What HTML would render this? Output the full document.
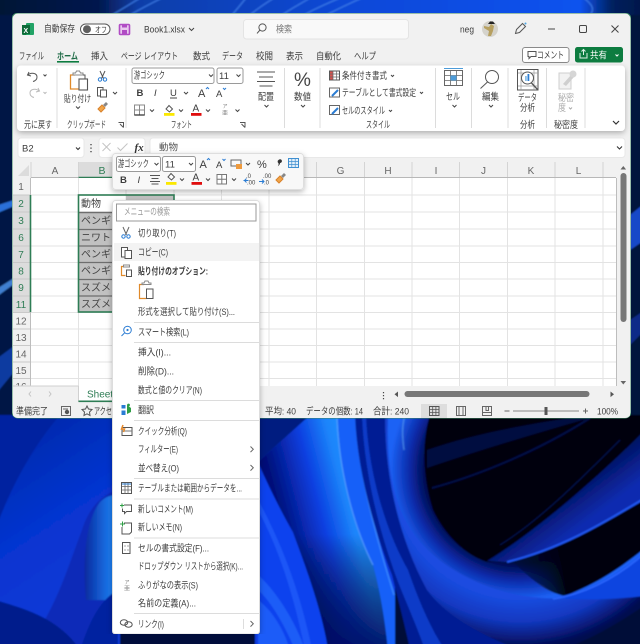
<!DOCTYPE html>
<html lang="ja"><head><meta charset="utf-8"><title>Excel</title>
<style>
html,body{margin:0;padding:0;background:#000;width:640px;height:644px;overflow:hidden}
svg{display:block}
text{font-family:"Liberation Sans","Noto Sans CJK JP",sans-serif;font-size:9.5px;fill:#3c3c3c}
.r{font-size:10px;fill:#666;text-anchor:middle}
.n{font-size:10px;fill:#2f7d55;text-anchor:middle}
.b{font-weight:bold}
.s{fill:none;stroke:#555;stroke-width:1}
.c{fill:none;stroke:#444;stroke-width:1}
.l{stroke:#e3e3e3;stroke-width:1}
.sp{stroke:#dcdcdc;stroke-width:1}
</style></head><body>
<svg xmlns="http://www.w3.org/2000/svg" width="640" height="644" viewBox="0 0 640 644">
<defs>
<linearGradient id="mainG" gradientUnits="userSpaceOnUse" x1="285" y1="535" x2="362" y2="515"><stop offset="0" stop-color="#020f78"/><stop offset=".5" stop-color="#0b3fe0"/><stop offset=".85" stop-color="#1c84fa"/><stop offset="1" stop-color="#1f8cff"/></linearGradient>
<linearGradient id="mainV" x1="0" y1="0" x2="0" y2="1"><stop offset="0" stop-color="#000" stop-opacity="0"/><stop offset=".5" stop-color="#000" stop-opacity="0"/><stop offset="1" stop-color="#000a60" stop-opacity=".9"/></linearGradient>
<radialGradient id="rB" gradientUnits="userSpaceOnUse" cx="520" cy="470" r="130"><stop offset="0" stop-color="#00010c"/><stop offset=".72" stop-color="#020a4a"/><stop offset=".85" stop-color="#0a2aa8"/><stop offset="1" stop-color="#1c62f5"/></radialGradient>
<radialGradient id="rL" gradientUnits="userSpaceOnUse" cx="520" cy="470" r="178"><stop offset=".72" stop-color="#1a4ce0"/><stop offset=".85" stop-color="#1238c0"/><stop offset="1" stop-color="#020a50"/></radialGradient>
<linearGradient id="wedge" gradientUnits="userSpaceOnUse" x1="505" y1="575" x2="562" y2="565"><stop offset="0" stop-color="#000410" stop-opacity="0"/><stop offset="1" stop-color="#000410"/></linearGradient>
<linearGradient id="streak" gradientUnits="userSpaceOnUse" x1="560" y1="480" x2="590" y2="520"><stop offset="0" stop-color="#020a48"/><stop offset="1" stop-color="#0a2cb0"/></linearGradient>
<linearGradient id="blob" gradientUnits="userSpaceOnUse" x1="84" y1="540" x2="114" y2="540"><stop offset="0" stop-color="#08289c"/><stop offset="1" stop-color="#1e84f8"/></linearGradient>
<linearGradient id="leftG" gradientUnits="userSpaceOnUse" x1="0" y1="430" x2="112" y2="600"><stop offset="0" stop-color="#0328a8"/><stop offset=".5" stop-color="#0634d0"/><stop offset="1" stop-color="#0a3ad8"/></linearGradient>
<linearGradient id="topG" x1="0" y1="0" x2="1" y2="0"><stop offset="0" stop-color="#041334"/><stop offset=".16" stop-color="#04194e"/><stop offset=".22" stop-color="#0d3ea8"/><stop offset=".55" stop-color="#0a48d8"/><stop offset=".9" stop-color="#0a52ee"/><stop offset=".95" stop-color="#03205e"/><stop offset="1" stop-color="#031648"/></linearGradient>
<filter id="bl" x="-5%" y="-5%" width="110%" height="110%"><feGaussianBlur stdDeviation=".8"/></filter>
<filter id="soft" x="0" y="0" width="100%" height="100%"><feGaussianBlur stdDeviation=".35"/></filter>
<filter id="sh" x="-20%" y="-20%" width="140%" height="140%"><feDropShadow dx="0" dy="2" stdDeviation="3" flood-color="#000" flood-opacity=".28"/></filter>
<clipPath id="win"><rect x="12" y="13" width="619" height="405" rx="6"/></clipPath>
</defs>

<!-- wallpaper -->
<g filter="url(#bl)">
<rect x="-5" y="-5" width="650" height="654" fill="#020a3a"/>
<rect x="-5" y="-5" width="650" height="25" fill="url(#topG)"/>
<g fill="none" stroke="#3f7fe8" stroke-width="1.5" opacity=".75">
<path d="M112 15 C124 8 132 3 140 -2"/><path d="M130 15 C142 8 152 3 162 -2"/><path d="M232 15 C238 8 242 3 246 -2"/><path d="M250 15 C258 8 266 3 274 -2"/><path d="M282 15 C292 8 302 3 310 -2"/><path d="M304 15 C316 8 328 3 340 -2"/><path d="M326 15 C340 8 350 3 362 -2"/><path d="M590 15 C596 8 590 3 584 -2"/>
</g>
<rect x="-5" y="15" width="18" height="410" fill="#041744"/>
<path d="M-5 206 L14 200 L14 206 L-5 214Z" fill="#2a6fd8"/>
<path d="M-5 290 L14 278 L14 284 L-5 298Z" fill="#3f7fd0"/>
<path d="M-5 360 L14 346 L14 372 L-5 395Z" fill="#0d3aa0"/>
<rect x="630" y="15" width="15" height="410" fill="#04123e"/>
<path d="M630 215 L645 203 L645 240 L630 250Z" fill="#1748c8"/>
<path d="M630 320 L645 310 L645 330 L630 345Z" fill="#0a2a88"/>
<!-- bottom left -->
<rect x="-5" y="415" width="125" height="235" fill="url(#leftG)"/>
<path d="M-5 415 H60 C30 450 10 490 -5 530Z" fill="#0222a0"/>
<path d="M30 644 C60 600 70 560 82 530 C88 510 100 495 118 490 V650 H30Z" fill="#0a2cb8"/>
<path d="M86 600 C82 560 86 520 100 502 C106 496 112 495 118 495 V600Z" fill="url(#blob)"/>
<path d="M-5 600 C30 610 60 620 80 650 H-5Z" fill="#031c8c"/>
<path d="M80 650 C90 620 100 600 118 590 V650Z" fill="#0420a0"/>
<!-- right of menu -->
<rect x="255" y="415" width="140" height="235" fill="#0a3adf"/>
<path d="M258 415 H310 L258 462Z" fill="#041a80"/>
<path id="mn" d="M258 462 L307 418 H338 C340 470 352 525 373 565 C380 590 385 620 388 650 H328 C322 610 305 565 293 532 C280 510 268 485 258 462Z" fill="url(#mainG)"/>
<path d="M258 462 L307 418 H338 C340 470 352 525 373 565 C380 590 385 620 388 650 H328 C322 610 305 565 293 532 C280 510 268 485 258 462Z" fill="url(#mainV)"/>
<path d="M258 464 C270 490 282 512 293 534 C305 565 322 610 328 650 H258Z" fill="#0c42ee"/>
<path d="M258 500 C280 540 300 590 312 650 H305 C295 600 280 550 258 510Z" fill="#2a6aff" opacity=".5"/>
<path d="M258 575 C275 590 295 620 305 650 H295 C285 625 270 600 258 590Z" fill="#2f74ff" opacity=".55"/>
<path d="M258 600 C272 610 284 630 290 650 H258Z" fill="#1a5cf8"/>
<path d="M338 415 H357 C358 470 374 530 394 590 C400 615 406 635 410 650 H388 C385 620 380 590 373 565 C352 525 340 470 338 415Z" fill="#1460f8"/>
<path d="M337 418 C339 468 352 523 373 565" fill="none" stroke="#5aa0ff" stroke-width="1.2" opacity=".8"/>
<path d="M356 415 C358 470 374 530 394 595" fill="none" stroke="#3f8cff" stroke-width="1.5" opacity=".8"/>
<!-- dark right area -->
<rect x="395" y="415" width="250" height="235" fill="#020838"/>
<path d="M355 415 H400 L440 600 L540 650 H410 C405 625 398 600 392 575 C374 530 357 470 355 415Z" fill="#041c94"/>
<path d="M366 415 C368 470 385 530 408 570 C415 590 428 625 445 650 H425 C415 620 400 590 392 565 C378 525 364 470 362 415Z" fill="#0e3ac8"/>
<path d="M385 415 C385 480 400 540 427 590 C445 615 480 635 520 650 H560 C590 640 620 622 645 605 V415Z" fill="url(#rL)"/>
<path d="M388 415 C386 470 395 510 417 538 C440 568 490 595 543 598 C580 600 610 598 645 596 V415Z" fill="url(#rB)"/>
<path d="M405 415 C402 425 402 435 404 450" fill="none" stroke="#5aa0f0" stroke-width="1.5" opacity=".6"/>
<!-- black centre -->
<path d="M430 415 C422 440 422 475 433 510 C445 535 465 555 487 562 L513 562 C555 550 600 525 645 500 V415Z" fill="#00010c"/>
<path d="M427 450 C470 435 520 425 590 415 L600 415 C540 432 480 450 427 468Z" fill="#03104c" opacity=".8"/>
<path d="M432 488 C480 475 540 450 590 418" fill="none" stroke="#051a70" stroke-width="2" opacity=".6"/>
<path d="M487 561 C530 535 590 485 645 430 V500 C600 525 555 550 505 562Z" fill="url(#streak)"/>
<path d="M500 545 C540 520 580 480 620 440" fill="none" stroke="#051a70" stroke-width="1" opacity=".7"/>
<path d="M513 562 C555 550 600 525 645 500 V548 C620 568 600 582 565 596 C545 592 530 578 513 562Z" fill="url(#wedge)"/>
<path d="M507 562 C560 549 600 525 645 498" fill="none" stroke="#2058f4" stroke-width="2"/>
<path d="M553 598 C595 590 620 572 645 552 V596 C610 600 580 600 553 598Z" fill="#0c44e0"/>
<path d="M553 599 C590 593 620 575 645 553" fill="none" stroke="#2a68ff" stroke-width="1.5"/>
</g>

<g filter="url(#soft)">
<!-- window -->
<rect x="12" y="13" width="619" height="405" rx="6" fill="#f1f1f1" stroke="#3f8a63" stroke-width="1"/>
<g clip-path="url(#win)">
<rect x="22" y="25" width="11" height="10" rx="1" fill="#107c41"/><rect x="26" y="23" width="8" height="12" rx="1" fill="#21a366"/><rect x="22" y="25" width="8" height="9" fill="#0b6b38"/>
<text x="23.500" y="33" style="font-size:7px;fill:#fff;font-weight:bold">X</text>
<text x="44" y="32" textLength="31" lengthAdjust="spacingAndGlyphs">自動保存</text>
<rect x="80.500" y="24" width="29.500" height="10.500" rx="5.200" fill="#fff" stroke="#555"/><circle cx="87" cy="29.200" r="4" fill="#5e5e5e"/>
<text x="95" y="32.500" textLength="12" lengthAdjust="spacingAndGlyphs" style="font-size:8px">オフ</text>
<rect x="119.500" y="24.500" width="10" height="10" rx="1" fill="#e8c8ee" stroke="#b04cc4" stroke-width="1.600"/><rect x="122" y="24.500" width="5" height="3" fill="#b04cc4"/><rect x="122" y="30" width="5" height="4.500" fill="#b04cc4"/>
<text x="144" y="32.500" textLength="41" lengthAdjust="spacingAndGlyphs" style="font-size:9.500px">Book1.xlsx</text>
<path class="c" d="M189 28l2.500 2.500 2.500-2.500"/>
<rect x="243.500" y="19.500" width="165" height="19.500" rx="3" fill="#f9f9f9" stroke="#e4e4e4"/>
<circle cx="262.500" cy="27.500" r="3.600" class="s"/><path class="s" d="M260 30l-3 3.400"/>
<text x="276" y="32.500" textLength="16" lengthAdjust="spacingAndGlyphs" style="fill:#777">検索</text>
<text x="460" y="32.500" textLength="14" lengthAdjust="spacingAndGlyphs" style="font-size:9.500px">neg</text>
<circle cx="490" cy="29" r="8" fill="#d5d3cc"/><path d="M484 26 L489 27 L491 24 L494 26 L493 31 L491 36 L488 36 L489 31 L484 28Z" fill="#b7a060"/><path d="M488 24 h7 l-2 -2.500 h-3z" fill="#222"/>
<path class="s" d="M515.500 33.500l1-4 6-6 3 3-6 6z"/><circle cx="525.500" cy="23.500" r="1" fill="#4aa3df"/>
<path d="M548 29h7" stroke="#444"/><rect x="579.500" y="25.500" width="7" height="7" rx="1.200" class="c"/><path class="c" d="M611.500 25.500l7 7m0-7l-7 7"/>

<text x="19" y="59.500" textLength="25" lengthAdjust="spacingAndGlyphs">ファイル</text>
<text x="57" y="59.500" textLength="21" lengthAdjust="spacingAndGlyphs" class="b" style="fill:#1f6b45">ホーム</text>
<rect x="57" y="61" width="22" height="1.600" fill="#107c41"/>
<text x="91" y="59.500" textLength="17" lengthAdjust="spacingAndGlyphs">挿入</text>
<text x="121" y="59.500" textLength="57" lengthAdjust="spacingAndGlyphs">ページ レイアウト</text>
<text x="193" y="59.500" textLength="17" lengthAdjust="spacingAndGlyphs">数式</text>
<text x="222" y="59.500" textLength="21" lengthAdjust="spacingAndGlyphs">データ</text>
<text x="256" y="59.500" textLength="17" lengthAdjust="spacingAndGlyphs">校閲</text>
<text x="286" y="59.500" textLength="17" lengthAdjust="spacingAndGlyphs">表示</text>
<text x="316" y="59.500" textLength="25" lengthAdjust="spacingAndGlyphs">自動化</text>
<text x="354" y="59.500" textLength="22" lengthAdjust="spacingAndGlyphs">ヘルプ</text>
<rect x="522.500" y="47.500" width="46.500" height="15" rx="2.500" fill="#fff" stroke="#8a8a8a"/>
<path class="s" d="M528 51.500h8v5h-5l-2 2v-2h-1z"/>
<text x="537" y="58.500" textLength="27" lengthAdjust="spacingAndGlyphs">コメント</text>
<rect x="575" y="47" width="48" height="15.500" rx="2.500" fill="#107c41"/>
<path d="M580 53v5h7v-5m-3.500 2v-5m-2 1.500l2-2 2 2" fill="none" stroke="#dff0e6"/>
<text x="590" y="58.500" textLength="17" lengthAdjust="spacingAndGlyphs" style="fill:#fff">共有</text>
<path d="M615.500 54.500l1.500 1.500 1.500-1.500" fill="none" stroke="#fff"/>

<rect x="17" y="65.500" width="608" height="65.500" rx="4" fill="#fff" filter="url(#sh)"/>
<g stroke="#dcdcdc"><path d="M57 68v60M126 68v60M284.500 68v60M320 68v60M435.500 68v60M471.500 68v60M508 68v60M546.500 68v60M585 68v60"/></g>
<path d="M29 72l-1.500 3 3.500 1M28 75c3-3 9-2 9 2 0 2.500-2 4-4 4.500" fill="none" stroke="#555"/>
<path class="c" d="M43.500 74.500l1.500 1.500 1.500-1.500"/>
<path d="M38 88l1.500 3-3.500 1M39 91c-3-3-9-2-9 2 0 2.500 2 4 4 4.500" fill="none" stroke="#bbb"/>
<path d="M43.500 92l1.500 1.500 1.500-1.500" fill="none" stroke="#bbb"/>
<text x="24" y="128" textLength="28" lengthAdjust="spacingAndGlyphs">元に戻す</text>
<path d="M75 75h-4.500v14h8" fill="#fff" stroke="#e08a2c" stroke-width="1.300"/>
<path d="M73 75h10v-2h-2.500l-1-2h-3l-1 2h-2.500z" fill="#fff" stroke="#888"/>
<path d="M83 75h2v4" class="s"/>
<rect x="79" y="79" width="8.500" height="11" fill="#fff" stroke="#555" stroke-width="1.100"/>
<text x="64" y="102" textLength="27" lengthAdjust="spacingAndGlyphs">貼り付け</text>
<path class="c" d="M76 106.500l2 2 2-2"/>
<path d="M100 71l3.500 7.500M105 71l-3.500 7.500" stroke="#555" fill="none"/><circle cx="100" cy="79.500" r="1.700" fill="none" stroke="#2b7cd3"/><circle cx="105" cy="79.500" r="1.700" fill="none" stroke="#2b7cd3"/>
<rect x="97.500" y="87.500" width="5.500" height="8.500" class="s" fill="#fff"/><rect x="100.500" y="90" width="6" height="7" fill="#fff" stroke="#555"/>
<path class="c" d="M113 92l2 2 2-2"/>
<path d="M98 109l4-4 3 3-4 4z" fill="#f0a54a" stroke="#d9822b"/><path d="M103 105l3-3 2 2-3 3z" fill="#888"/>
<text x="67" y="128" textLength="39" lengthAdjust="spacingAndGlyphs">クリップボード</text>
<path d="M118.500 122.500h5v5M120 124l3.500 3.500" class="s" stroke-width=".8"/>
<rect x="132" y="68" width="82" height="15.500" rx="2" fill="#fff" stroke="#9a9a9a"/>
<text x="134" y="78.500" textLength="31" lengthAdjust="spacingAndGlyphs">游ゴシック</text>
<path class="c" d="M209 74.500l2 2 2-2"/>
<rect x="217" y="68" width="26" height="15.500" rx="2" fill="#fff" stroke="#9a9a9a"/>
<text x="219" y="79" style="font-size:9.500px">11</text>
<path class="c" d="M236.500 74.500l2 2 2-2"/>
<text x="136.500" y="96" class="b" style="font-size:9.500px">B</text>
<text x="154" y="96" style="font-size:9.500px;font-style:italic">I</text>
<text x="170" y="96" style="font-size:9.500px">U</text><path d="M170 98h7" stroke="#444"/>
<path class="c" d="M184 92l2 2 2-2"/>
<text x="198" y="97" style="font-size:11px">A</text><path d="M206 89l1.500-1.500 1.500 1.500" fill="none" stroke="#2b7cd3"/>
<text x="216" y="97" style="font-size:9.500px">A</text><path d="M223 88l1.500 1.500 1.500-1.500" fill="none" stroke="#2b7cd3"/>
<rect x="134.500" y="105" width="10" height="10" fill="#fff" stroke="#8a8a8a"/><path d="M139.500 105v10M134.500 110h10" stroke="#8a8a8a"/><path d="M134.500 115h10" stroke="#333" stroke-width="1.300"/>
<path class="c" d="M150 109.500l2 2 2-2"/>
<path d="M166 109l3-3.500 3.500 3.500-3 3z" fill="#fff" stroke="#555"/>
<rect x="164" y="113" width="10.500" height="2.800" fill="#fbe800"/>
<path class="c" d="M179 109.500l2 2 2-2"/>
<text x="192.500" y="111.500" style="font-size:10px">A</text>
<rect x="191" y="113" width="10.500" height="2.800" fill="#e01010"/>
<path class="c" d="M206 109.500l2 2 2-2"/>
<text x="222.500" y="108" style="font-size:5px;fill:#777">ア</text><text x="222" y="115" style="font-size:6px;fill:#888">亜</text>
<path class="c" d="M235.500 109.500l2 2 2-2"/>
<text x="171" y="128" textLength="21" lengthAdjust="spacingAndGlyphs">フォント</text>
<path d="M240 122.500h5v5M241.500 124l3.500 3.500" class="s" stroke-width=".8"/>
<path d="M257 72h18M259 77h14M257 81.500h18M259.500 86h13" stroke="#555"/>
<text x="258" y="100" textLength="16" lengthAdjust="spacingAndGlyphs">配置</text>
<path class="c" d="M264.500 105l2 2 2-2"/>
<text x="294" y="86" style="font-size:19px;fill:#444">%</text>
<text x="294" y="100" textLength="17" lengthAdjust="spacingAndGlyphs">数値</text>
<path class="c" d="M301 105l2 2 2-2"/>
<rect x="329.500" y="71" width="10" height="9" fill="#fff" stroke="#555"/><rect x="330" y="71.500" width="3" height="8" fill="#d9534f"/><path d="M329.500 74h10M329.500 77h10M333 71v9M336.500 71v9" stroke="#666" stroke-width=".7"/>
<text x="342" y="79" textLength="45" lengthAdjust="spacingAndGlyphs">条件付き書式</text><path class="c" d="M391 75l1.500 1.500 1.500-1.500"/>
<rect x="329.500" y="88" width="10" height="9" fill="#fff" stroke="#666"/><path d="M332 96l6-6" stroke="#2b7cd3" stroke-width="2"/>
<text x="342" y="96" textLength="74" lengthAdjust="spacingAndGlyphs">テーブルとして書式設定</text><path class="c" d="M420 92l1.500 1.500 1.500-1.500"/>
<rect x="329.500" y="105.500" width="10" height="9" fill="#fff" stroke="#666"/><path d="M332 114l6-6" stroke="#2b7cd3" stroke-width="2"/>
<text x="342" y="114" textLength="43" lengthAdjust="spacingAndGlyphs">セルのスタイル</text><path class="c" d="M389 110l1.500 1.500 1.500-1.500"/>
<text x="366" y="128" textLength="24" lengthAdjust="spacingAndGlyphs">スタイル</text>
<rect x="444.500" y="70.500" width="18" height="15" fill="#fff" stroke="#666"/><path d="M445 75.500h18M445 80.500h18M450.500 70.500v15M456.500 70.500v15" stroke="#666" stroke-width=".8"/><rect x="450.500" y="75.500" width="6" height="5" fill="#4e9cd9"/><path d="M444 68.500h19" stroke="#4e9cd9"/>
<text x="446" y="100" textLength="14" lengthAdjust="spacingAndGlyphs">セル</text>
<path class="c" d="M452.500 105l2 2 2-2"/>
<circle cx="492" cy="77" r="6.500" class="s"/><path class="s" d="M487.500 82l-7 6.500"/>
<text x="482" y="100" textLength="17" lengthAdjust="spacingAndGlyphs">編集</text>
<path class="c" d="M489 105l2 2 2-2"/>
<rect x="517.500" y="69.500" width="20.500" height="20.500" fill="#fff" stroke="#555"/><path d="M518 73h20M518 86h20M521 70v20M534 70v20" stroke="#999" stroke-width=".7"/><circle cx="527.500" cy="78" r="6" fill="#fff" stroke="#555"/><rect x="525" y="76" width="1.800" height="5" fill="#8cc0e8"/><rect x="527.500" y="74" width="1.800" height="7" fill="#2b7cd3"/><path d="M531.500 83l6 6.500" stroke="#555" stroke-width="1.300"/>
<text x="518" y="101" textLength="19" lengthAdjust="spacingAndGlyphs">データ</text>
<text x="520" y="111" textLength="15" lengthAdjust="spacingAndGlyphs">分析</text>
<text x="520" y="128" textLength="15" lengthAdjust="spacingAndGlyphs">分析</text>
<path d="M559 73h12v16h-12z" fill="#f2f2f2" stroke="#cfcfcf"/><path d="M563 84l8-9 3 2-8 9z" fill="#cfcfcf"/><circle cx="573" cy="74" r="3.500" fill="#d6d6d6"/>
<text x="558" y="101" textLength="16" lengthAdjust="spacingAndGlyphs" style="fill:#aaa">秘密</text>
<text x="558" y="111" textLength="8" lengthAdjust="spacingAndGlyphs" style="fill:#aaa">度</text>
<path d="M569 107.500l1.500 1.500 1.500-1.500" fill="none" stroke="#aaa"/>
<text x="554" y="128" textLength="24" lengthAdjust="spacingAndGlyphs">秘密度</text>
<path d="M613 121l3 3 3-3" fill="none" stroke="#333" stroke-width="1.200"/>

<rect x="18" y="138" width="66" height="19.500" rx="3" fill="#fff" stroke="#e8e8e8"/>
<text x="22" y="151.500" style="font-size:9.500px">B2</text>
<path d="M76 147.500l2 2 2-2" fill="none" stroke="#333" stroke-width="1.100"/>
<path d="M91 144v1.200M91 147.500v1.200M91 151v1.200" stroke="#333" stroke-width="1.200"/>
<rect x="99" y="138" width="46" height="19.500" rx="3" fill="#fff" stroke="#e8e8e8"/>
<path d="M102.500 143l8 8m0-8l-8 8" stroke="#c4c4c4" fill="none"/><path d="M117.500 147.500l3 3 7-7" stroke="#c4c4c4" fill="none"/>
<text x="134.500" y="151" style="font-size:11px;font-style:italic;font-family:'Liberation Serif',serif;font-weight:bold;fill:#333">fx</text>
<rect x="150" y="138" width="475" height="19.500" rx="3" fill="#fff" stroke="#e8e8e8"/>
<text x="159" y="150.500" textLength="19" lengthAdjust="spacingAndGlyphs" style="fill:#555;font-size:9.500px">動物</text>
<path d="M617 146.500l2.500 2.500 2.500-2.500" fill="none" stroke="#333" stroke-width="1.100"/>

<rect x="13" y="162" width="604" height="16" fill="#f1f1f1"/>
<path d="M29 165v11H18z" fill="#dcdcdc"/>
<rect x="79" y="162" width="47" height="16" fill="#dcdcdc"/>
<g stroke="#d4d4d4"><path d="M31 162v16M78.500 162v16M126 162v16M174 162v16M221.500 162v16M269 162v16M316.500 162v16M364.500 162v16M412 162v16M459.500 162v16M507.500 162v16M555 162v16M603 162v16"/></g>
<path d="M78.500 177.500H174" stroke="#2f7d55" stroke-width="1.600"/>
<path d="M31 177.500H78M174 177.500H616" stroke="#b8b8b8"/>
<text class="r" x="55" y="174">A</text><text class="n" x="102" y="174" style="font-size:10.500px">B</text>
<text class="r" x="340.500" y="174">G</text><text class="r" x="388" y="174">H</text><text class="r" x="436" y="174">I</text><text class="r" x="483.500" y="174">J</text><text class="r" x="531" y="174">K</text><text class="r" x="578.500" y="174">L</text>

<rect x="31" y="178" width="585" height="208" fill="#fff"/>
<path class="l" d="M31 195H616M31 212H616M31 229H616M31 246H616M31 262.500H616M31 279H616M31 296H616M31 312.500H616M31 329H616M31 345.500H616M31 362H616M31 378.500H616"/>
<path class="l" d="M78.500 178V386M126 178V386M174 178V386M221.500 178V386M269 178V386M316.500 178V386M364.500 178V386M412 178V386M459.500 178V386M507.500 178V386M555 178V386M603 178V386"/>
<path d="M616.500 178V386" stroke="#bdbdbd"/>
<path d="M30.500 178V386" stroke="#bdbdbd"/>
<rect x="13" y="195" width="17" height="117" fill="#dcdcdc"/>
<path d="M13 212H30M13 229H30M13 246H30M13 262.500H30M13 279H30M13 296H30M13 312.500H30M13 329H30M13 345.500H30M13 362H30M13 378.500H30M13 195H30" stroke="#c9c9c9"/>
<text class="r" x="21" y="190">1</text>
<text class="n" x="21" y="207">2</text><text class="n" x="21" y="224">3</text><text class="n" x="21" y="241">6</text><text class="n" x="21" y="258">7</text><text class="n" x="21" y="274.500">8</text><text class="n" x="21" y="291">9</text><text class="n" x="21" y="308">11</text>
<text class="r" x="21" y="324.500">12</text><text class="r" x="21" y="341">13</text><text class="r" x="21" y="357.500">14</text><text class="r" x="21" y="374">15</text><text class="r" x="21" y="390">16</text>
<path d="M30.500 195V312" stroke="#2f7d55" stroke-width="1.600"/>
<rect x="79" y="212" width="47" height="100" fill="#c1c1c1"/>
<rect x="126" y="195" width="48" height="117" fill="#c1c1c1"/>
<path d="M79 212.500H126M79 229.500H126M79 246H126M79 262.500H126M79 279.500H126M79 296H126" stroke="#6e6e6e" stroke-width="1.300"/>
<path d="M79 212.500H174" stroke="#6e6e6e" stroke-width="1.300"/>
<text x="81" y="207" textLength="20" lengthAdjust="spacingAndGlyphs" style="font-size:10px;fill:#444">動物</text>
<text x="81" y="224" textLength="30" style="font-size:10px;fill:#444">ペンギ</text>
<text x="81" y="241" textLength="30" style="font-size:10px;fill:#444">ニワト</text>
<text x="81" y="257.500" textLength="30" style="font-size:10px;fill:#444">ペンギ</text>
<text x="81" y="274" textLength="30" style="font-size:10px;fill:#444">ペンギ</text>
<text x="81" y="291" textLength="30" style="font-size:10px;fill:#444">スズメ</text>
<text x="81" y="307.500" textLength="30" style="font-size:10px;fill:#444">スズメ</text>
<rect x="78.500" y="195" width="95.500" height="117" fill="none" stroke="#2f7d55" stroke-width="1.600"/>
<path d="M620.500 169.500l2.800-3.500 2.800 3.500z" fill="#666"/>
<rect x="620.500" y="173" width="6" height="149" rx="3" fill="#777"/>
<path d="M620.500 381l2.800 3.500 2.800-3.500z" fill="#666"/>

<rect x="13" y="386" width="617" height="32" fill="#f1f1f1"/>
<path d="M31 391.500l-2 2.500 2 2.500" fill="none" stroke="#c4c4c4"/><path d="M49 391.500l2 2.500-2 2.500" fill="none" stroke="#c4c4c4"/>
<path d="M13 386H78.500" stroke="#d0d0d0"/>
<rect x="78.500" y="386" width="40" height="15" fill="#fff"/><path d="M78.500 386v16" stroke="#d0d0d0"/>
<rect x="78.500" y="400.500" width="40" height="1.600" fill="#2f7d55"/>
<text x="87" y="397.500" style="font-size:10px;fill:#2f7d55">Sheet1</text>
<path d="M383.500 395v1.200M383.500 398v1.200M383.500 392v1.200" stroke="#444" stroke-width="1.200"/>
<path d="M398 391.500l-3.500 2.800 3.500 2.800z" fill="#555"/>
<rect x="404.500" y="391" width="185" height="6" rx="3" fill="#777"/>
<path d="M610.500 391.500l3.500 2.800-3.500 2.800z" fill="#555"/>

<text x="16" y="414.500" textLength="32" lengthAdjust="spacingAndGlyphs">準備完了</text>
<rect x="61.500" y="406.500" width="9" height="9" fill="none" stroke="#666"/><circle cx="67" cy="412" r="2.200" fill="#555"/><path d="M63 409h5" stroke="#666"/>
<path d="M87 406l1.500 3 3.500.5-2.500 2.500.5 3.500-3-1.700-3 1.700.5-3.500-2.500-2.500 3.500-.5z" class="s"/>
<text x="94" y="414.500" textLength="18" lengthAdjust="spacingAndGlyphs">アクセ</text>
<text x="265" y="414.500" textLength="31" lengthAdjust="spacingAndGlyphs">平均: 40</text>
<text x="306" y="414.500" textLength="57" lengthAdjust="spacingAndGlyphs">データの個数: 14</text>
<text x="373" y="414.500" textLength="36" lengthAdjust="spacingAndGlyphs">合計: 240</text>
<rect x="421" y="404" width="26" height="14" fill="#dddddd"/>
<rect x="429.500" y="406.500" width="9.500" height="9" fill="none" stroke="#555"/><path d="M429.500 409.500h9.500M429.500 412.500h9.500M432.700 406.500v9M435.900 406.500v9" stroke="#555" stroke-width=".8"/>
<rect x="456.500" y="406.500" width="9" height="9" fill="none" stroke="#666"/><path d="M459 406.500v9M463 406.500v9" stroke="#666"/>
<rect x="482.500" y="406.500" width="9" height="9" fill="none" stroke="#666"/><path d="M486 406.500v4h2.500v-4M482.500 412.500h9" stroke="#666" fill="none"/>
<path d="M504.500 411h5M583 411h5M585.500 408.500v5" stroke="#666"/>
<path d="M513 411h66" stroke="#888"/><rect x="544.500" y="407" width="3" height="8" fill="#555"/>
<text x="597" y="414.500" textLength="21" lengthAdjust="spacingAndGlyphs">100%</text>
</g>

<!-- mini toolbar -->
<rect x="112.500" y="153.500" width="191" height="36" rx="3" fill="#f8f8f8" stroke="#dedede" filter="url(#sh)"/>
<rect x="116.500" y="156.500" width="44" height="15" rx="2" fill="#fff" stroke="#999"/>
<text x="118" y="167" textLength="31" lengthAdjust="spacingAndGlyphs">游ゴシック</text>
<path class="c" d="M154.500 163l2 2 2-2"/>
<rect x="162.500" y="156.500" width="33" height="15" rx="2" fill="#fff" stroke="#999"/>
<text x="165" y="167.500" style="font-size:9.500px">11</text>
<path class="c" d="M189 163l2 2 2-2"/>
<text x="199.500" y="168" style="font-size:11px">A</text><path d="M207 160l1.500-1.500 1.500 1.500" fill="none" stroke="#2b7cd3"/>
<text x="216" y="168" style="font-size:9.500px">A</text><path d="M222.500 159l1.500 1.500 1.500-1.500" fill="none" stroke="#2b7cd3"/>
<rect x="231" y="160" width="10" height="6" fill="none" stroke="#666"/><rect x="236" y="164" width="6" height="5" fill="#ee9a3c"/>
<path class="c" d="M246 163l2 2 2-2"/>
<text x="257" y="168" style="font-size:11px">%</text>
<path d="M278.500 160a1.900 1.900 0 1 1 1.600 3c-.2 1.500-1 2.500-2.300 3.200 .7-1 1-2 .7-3a1.900 1.900 0 0 1 0-3.200z" fill="#333"/>
<rect x="288.500" y="158.500" width="10" height="9" fill="#e4f0fa" stroke="#3f8fd0"/><path d="M288.500 161.500h10M288.500 164.500h10M291.800 158.500v9M295.200 158.500v9" stroke="#3f8fd0" stroke-width=".7"/>
<text x="120" y="183" class="b" style="font-size:9.500px">B</text>
<text x="137.500" y="183" style="font-size:9.500px;font-style:italic">I</text>
<path d="M150 175.500h10M151.500 178.500h7M150 181.500h10M151.500 184h7" stroke="#555"/>
<path d="M168 177l3-3.500 3.500 3.500-3 3z" fill="#fff" stroke="#555"/><rect x="166" y="182" width="10.500" height="2.800" fill="#fbe800"/>
<path class="c" d="M180 178.500l2 2 2-2"/>
<text x="192.500" y="180.500" style="font-size:10px">A</text><rect x="191.500" y="182" width="10.500" height="2.800" fill="#e01010"/>
<path class="c" d="M206 178.500l2 2 2-2"/>
<rect x="217" y="174.500" width="9.500" height="9.500" fill="#fff" stroke="#777"/><path d="M221.800 174.500v9.500M217 179.200h9.500" stroke="#777"/>
<path class="c" d="M232 178.500l2 2 2-2"/>
<text x="246" y="178" style="font-size:6px;fill:#444">.0</text><text x="247" y="184.500" style="font-size:6px;fill:#444">.00</text><path d="M243.500 180.500h5m-2-2l-2 2 2 2" fill="none" stroke="#2b7cd3"/>
<text x="263" y="178" style="font-size:6px;fill:#444">.00</text><text x="264" y="184.500" style="font-size:6px;fill:#444">.0</text><path d="M259 181.500h5m-2-2l2 2-2 2" fill="none" stroke="#2b7cd3"/>
<path d="M276 180l4-4 3 3-4 4z" fill="#f0a54a" stroke="#d9822b"/><path d="M281 176l3-3 2 2-3 3z" fill="#888"/>

<!-- context menu -->
<rect x="112.500" y="200.500" width="147" height="433.500" rx="3" fill="#fff" stroke="#dddddd" filter="url(#sh)"/>
<rect x="116.500" y="204" width="139.500" height="17" fill="#fff" stroke="#9a9a9a"/>
<text x="124" y="215" textLength="46" lengthAdjust="spacingAndGlyphs" style="fill:#999">メニューの検索</text>
<rect x="114" y="243" width="145" height="18" fill="#f3f3f3"/>
<path class="sp" d="M134 322.500H259M134 342.500H259M134 400.500H259M134 420.500H259M134 478.500H259M134 499H259M134 538H259M134 613.500H259"/>

<path d="M123 227l3.500 8M129 227l-3.500 8" stroke="#666" fill="none"/><circle cx="123.500" cy="236.500" r="1.700" fill="none" stroke="#2b7cd3"/><circle cx="128.500" cy="236.500" r="1.700" fill="none" stroke="#2b7cd3"/>
<rect x="121.500" y="247.500" width="6" height="9.500" fill="#fff" stroke="#555"/><rect x="125" y="250.500" width="6.500" height="8" fill="#fff" stroke="#555"/>
<path d="M125 266.500h-3.500v9h4" fill="none" stroke="#e08a2c" stroke-width="1.200"/><rect x="123.500" y="265" width="6" height="2" fill="#fff" stroke="#888"/><rect x="126.500" y="270" width="5" height="6.500" fill="#fff" stroke="#555"/>
<path d="M144 284.500h-4.500v14h7" fill="#fff" stroke="#e08a2c" stroke-width="1.200"/><path d="M142 284.500h9v-1.500h-2l-1-2h-3l-1 2h-2z" fill="#fff" stroke="#888"/><rect x="146.500" y="289" width="6.500" height="9.500" fill="#fff" stroke="#555"/>
<circle cx="127.500" cy="330" r="3.800" fill="none" stroke="#2b7cd3"/><path d="M124.500 333l-3 3" stroke="#2b7cd3"/><circle cx="127.500" cy="330" r="1.100" fill="#2b7cd3"/>
<rect x="121.500" y="405" width="4" height="3.500" fill="#2b7cd3"/><rect x="121.500" y="410.500" width="4" height="4.500" fill="#2b7cd3"/><path d="M127 405l4 3v4l-4 2" fill="#2f9e44"/><circle cx="128.500" cy="405" r="1.400" fill="#2f9e44"/>
<rect x="122" y="427.500" width="10" height="8" fill="none" stroke="#555"/><path d="M122 431h10" stroke="#777"/><path d="M123 425l-1.500 4h3l-1 3" stroke="#e88a2c" fill="none" stroke-width="1.500"/>
<rect x="121.500" y="482.500" width="10" height="11" fill="#fff" stroke="#555"/><path d="M121.500 486.500h10M121.500 490h10M125 483v11M128 483v11" stroke="#666" stroke-width=".8"/><path d="M122 484h9" stroke="#2b7cd3"/>
<path d="M124 505h7.500v6.500h-5l-2 2v-2h-2v-3" fill="none" stroke="#555"/><path d="M122 503.500v4M120 505.500h4" stroke="#2f9e44"/>
<path d="M124 523h7.500v9l-2 2h-7.500v-7" fill="none" stroke="#555"/><path d="M122.500 521.500v5M120 524h5" stroke="#2f9e44"/>
<rect x="122.500" y="542.500" width="7.500" height="11" fill="#fff" stroke="#555"/><path d="M124.500 546h1M124.500 550h1M127.500 546h1M127.500 550h1" stroke="#555"/>
<text x="124.500" y="584" style="font-size:5px;fill:#777">ア</text><text x="124" y="590.500" style="font-size:6px;fill:#888">亜</text>
<ellipse cx="124" cy="622.500" rx="3.700" ry="2.700" fill="none" stroke="#555"/><ellipse cx="128.500" cy="624.500" rx="3.700" ry="2.700" fill="none" stroke="#555"/>

<text x="138" y="236.500" textLength="38" lengthAdjust="spacingAndGlyphs">切り取り(T)</text>
<text x="138" y="255.500" textLength="30" lengthAdjust="spacingAndGlyphs">コピー(C)</text>
<text x="138" y="274.500" textLength="70" lengthAdjust="spacingAndGlyphs" class="b">貼り付けのオプション:</text>
<text x="138" y="315" textLength="97" lengthAdjust="spacingAndGlyphs">形式を選択して貼り付け(S)...</text>
<text x="138" y="335.500" textLength="51" lengthAdjust="spacingAndGlyphs">スマート検索(L)</text>
<text x="138" y="355.500" textLength="33" lengthAdjust="spacingAndGlyphs">挿入(I)...</text>
<text x="138" y="374.500" textLength="36" lengthAdjust="spacingAndGlyphs">削除(D)...</text>
<text x="138" y="393.500" textLength="64" lengthAdjust="spacingAndGlyphs">数式と値のクリア(N)</text>
<text x="138" y="413.500" textLength="16" lengthAdjust="spacingAndGlyphs">翻訳</text>
<text x="138" y="434.500" textLength="49" lengthAdjust="spacingAndGlyphs">クイック分析(Q)</text>
<text x="138" y="452.500" textLength="40" lengthAdjust="spacingAndGlyphs">フィルター(E)</text>
<text x="138" y="471.500" textLength="41" lengthAdjust="spacingAndGlyphs">並べ替え(O)</text>
<text x="138" y="491.500" textLength="104" lengthAdjust="spacingAndGlyphs">テーブルまたは範囲からデータを...</text>
<text x="138" y="512.500" textLength="55" lengthAdjust="spacingAndGlyphs">新しいコメント(M)</text>
<text x="138" y="530.500" textLength="44" lengthAdjust="spacingAndGlyphs">新しいメモ(N)</text>
<text x="138" y="551.500" textLength="71" lengthAdjust="spacingAndGlyphs">セルの書式設定(F)...</text>
<text x="138" y="569.500" textLength="105" lengthAdjust="spacingAndGlyphs">ドロップダウン リストから選択(K)...</text>
<text x="138" y="588.500" textLength="60" lengthAdjust="spacingAndGlyphs">ふりがなの表示(S)</text>
<text x="138" y="606.500" textLength="58" lengthAdjust="spacingAndGlyphs">名前の定義(A)...</text>
<text x="138" y="627.500" textLength="26" lengthAdjust="spacingAndGlyphs">リンク(I)</text>
<path d="M250.500 446.500l2.800 2.800-2.800 2.800M250.500 465l2.800 2.800-2.800 2.800M250.500 621l2.800 2.800-2.800 2.800" fill="none" stroke="#666"/>
<path d="M243.500 619v10" stroke="#ddd"/>
</g>
</svg>
</body></html>
